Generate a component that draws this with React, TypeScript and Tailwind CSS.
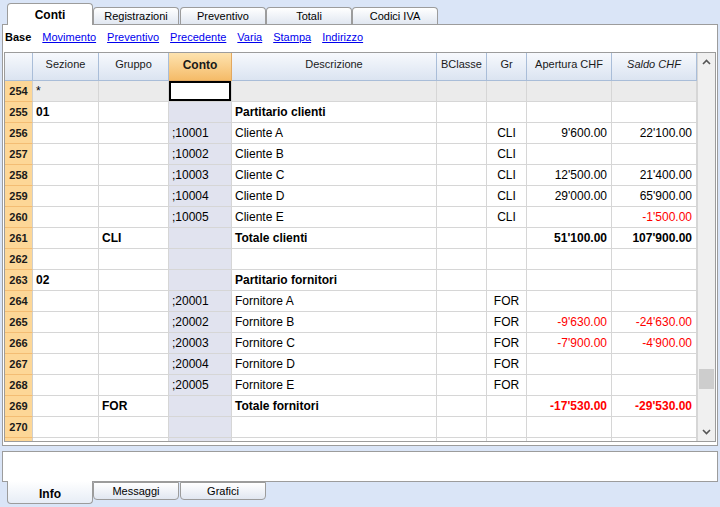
import React from "react";

type Row = {
  n?: string;
  sez?: string;
  gru?: string;
  conto?: string;
  desc?: string;
  gr?: string;
  ap?: string;
  sa?: string;
  bold?: boolean;
  apRed?: boolean;
  saRed?: boolean;
  gray?: boolean;
};

const rows: Row[] = [
  { n: "254", sez: "*", gray: true },
  { n: "255", sez: "01", desc: "Partitario clienti", bold: true },
  { n: "256", conto: ";10001", desc: "Cliente A", gr: "CLI", ap: "9'600.00", sa: "22'100.00" },
  { n: "257", conto: ";10002", desc: "Cliente B", gr: "CLI" },
  { n: "258", conto: ";10003", desc: "Cliente C", gr: "CLI", ap: "12'500.00", sa: "21'400.00" },
  { n: "259", conto: ";10004", desc: "Cliente D", gr: "CLI", ap: "29'000.00", sa: "65'900.00" },
  { n: "260", conto: ";10005", desc: "Cliente E", gr: "CLI", sa: "-1'500.00", saRed: true },
  { n: "261", gru: "CLI", desc: "Totale clienti", ap: "51'100.00", sa: "107'900.00", bold: true },
  { n: "262" },
  { n: "263", sez: "02", desc: "Partitario fornitori", bold: true },
  { n: "264", conto: ";20001", desc: "Fornitore A", gr: "FOR" },
  { n: "265", conto: ";20002", desc: "Fornitore B", gr: "FOR", ap: "-9'630.00", sa: "-24'630.00", apRed: true, saRed: true },
  { n: "266", conto: ";20003", desc: "Fornitore C", gr: "FOR", ap: "-7'900.00", sa: "-4'900.00", apRed: true, saRed: true },
  { n: "267", conto: ";20004", desc: "Fornitore D", gr: "FOR" },
  { n: "268", conto: ";20005", desc: "Fornitore E", gr: "FOR" },
  { n: "269", gru: "FOR", desc: "Totale fornitori", ap: "-17'530.00", sa: "-29'530.00", bold: true, apRed: true, saRed: true },
  { n: "270" },
  {},
];

const cellBase = "h-[21px] shrink-0 border-r border-b border-[#d6d6d6] flex items-center overflow-hidden whitespace-nowrap";

function DataRow({ r }: { r: Row }) {
  const bg = r.gray ? "bg-[#ebebeb]" : "bg-white";
  const b = r.bold ? "font-bold" : "";
  return (
    <div className="flex">
      <div className="h-[21px] w-[28px] shrink-0 bg-[#fdd797] border-r border-r-[#cfcfcf] border-b border-b-[#f3bd74] flex items-center justify-center text-[11px] font-bold text-[#1a1a1a]">
        {r.n}
      </div>
      <div className={`${cellBase} w-[66px] pl-[3px] ${bg} ${b}`}>{r.sez}</div>
      <div className={`${cellBase} w-[70px] pl-[3px] ${bg} ${b}`}>{r.gru}</div>
      {r.gray ? (
        <div className={`${cellBase} w-[63px] bg-[#ebebeb] p-0`}>
          <div className="w-[62px] h-[20px] bg-white border-2 border-black"></div>
        </div>
      ) : (
        <div className={`${cellBase} w-[63px] pl-[3px] bg-[#e1e3ef]`}>{r.conto}</div>
      )}
      <div className={`${cellBase} w-[205px] pl-[3px] ${bg} ${b}`}>{r.desc}</div>
      <div className={`${cellBase} w-[50px] ${bg}`}></div>
      <div className={`${cellBase} w-[40px] justify-center ${bg}`}>{r.gr}</div>
      <div className={`${cellBase} w-[85px] justify-end pr-[4px] ${bg} ${b} ${r.apRed ? "text-[#ff0000]" : ""}`}>{r.ap}</div>
      <div className={`${cellBase} w-[85px] justify-end pr-[4px] ${bg} ${b} ${r.saRed ? "text-[#ff0000]" : ""}`}>{r.sa}</div>
    </div>
  );
}

const hdr =
  "h-[28px] shrink-0 border-r border-b border-[#a9bdd8] bg-gradient-to-b from-[#f7f9fd] to-[#dbe4f1] flex items-center justify-center pb-[4px] text-[11px] text-[#1a1a1a]";

function TopTab({ label, active }: { label: string; active?: boolean }) {
  if (active) {
    return (
      <div className="relative z-10 -mb-px w-[86px] h-[22px] bg-white border border-b-0 border-[#9c9c9c] rounded-t-[4px] flex items-center justify-center text-[12px] font-bold text-black">
        {label}
      </div>
    );
  }
  return (
    <div className="w-[86px] h-[17px] bg-gradient-to-b from-white to-[#e1e7f1] border border-b-0 border-[#9c9c9c] rounded-t-[4px] flex items-center justify-center text-[11px] text-black">
      {label}
    </div>
  );
}

function BottomTab({ label, active }: { label: string; active?: boolean }) {
  if (active) {
    return (
      <div className="relative z-10 -mt-px w-[86px] h-[23px] bg-gradient-to-b from-white to-[#e7edf6] border border-t-0 border-[#9c9c9c] rounded-b-[4px] flex items-center justify-center pt-[4px] text-[12px] font-bold text-black">
        {label}
      </div>
    );
  }
  return (
    <div className="w-[86px] h-[18px] bg-gradient-to-b from-white to-[#e1e7f1] border border-t border-[#9c9c9c] rounded-b-[4px] flex items-center justify-center text-[11px] text-black">
      {label}
    </div>
  );
}

export default function App() {
  return (
    <div className="w-[720px] h-[507px] overflow-hidden bg-[#dae5f7] flex flex-col text-[12px] text-black [font-family:'Liberation_Sans',Arial,sans-serif]">
      {/* top tabs */}
      <div className="h-[24px] flex items-end pl-[7px] shrink-0">
        <TopTab label="Conti" active />
        <TopTab label="Registrazioni" />
        <div className="w-px" />
        <TopTab label="Preventivo" />
        <TopTab label="Totali" />
        <TopTab label="Codici IVA" />
      </div>

      {/* main panel */}
      <div className="mx-[2px] h-[422px] shrink-0 bg-white border border-[#9c9c9c] flex flex-col">
        <div className="h-[27px] shrink-0 flex items-center gap-[11px] pl-[2px] pb-[3px] text-[11px]">
          <span className="font-bold text-black">Base</span>
          <span className="text-[#0000ee] underline">Movimento</span>
          <span className="text-[#0000ee] underline">Preventivo</span>
          <span className="text-[#0000ee] underline">Precedente</span>
          <span className="text-[#0000ee] underline">Varia</span>
          <span className="text-[#0000ee] underline">Stampa</span>
          <span className="text-[#0000ee] underline">Indirizzo</span>
        </div>
        <div className="ml-[1px] mr-[1px] h-[390px] shrink-0 border border-[#9c9c9c] flex overflow-hidden">
          <div className="flex flex-col w-[692px] shrink-0 overflow-hidden">
            <div className="flex">
              <div className={`${hdr} w-[28px]`}></div>
              <div className={`${hdr} w-[66px]`}>Sezione</div>
              <div className={`${hdr} w-[70px]`}>Gruppo</div>
              <div className="h-[28px] w-[63px] shrink-0 border-r border-b border-[#e2a860] bg-gradient-to-b from-[#fde3ae] to-[#f5bb68] flex items-center justify-center pb-[4px] text-[12px] font-bold text-[#1a1a1a]">
                Conto
              </div>
              <div className={`${hdr} w-[205px]`}>Descrizione</div>
              <div className={`${hdr} w-[50px]`}>BClasse</div>
              <div className={`${hdr} w-[40px]`}>Gr</div>
              <div className={`${hdr} w-[85px]`}>Apertura CHF</div>
              <div className={`${hdr} w-[85px] italic`}>Saldo CHF</div>
            </div>
            {rows.map((r, i) => (
              <DataRow key={i} r={r} />
            ))}
          </div>
          {/* scrollbar */}
          <div className="flex-1 bg-[#f0f0f0] border-l border-[#d6d6d6] flex flex-col items-center">
            <div className="h-[18px] w-full flex items-center justify-center">
              <svg width="9" height="6" viewBox="0 0 9 6">
                <path d="M1 5 L4.5 1.5 L8 5" fill="none" stroke="#555" strokeWidth="1.6" />
              </svg>
            </div>
            <div className="flex-1 w-full flex flex-col items-center justify-end pb-[34px]">
              <div className="w-[15px] h-[20px] bg-[#cdcdcd]" />
            </div>
            <div className="h-[18px] w-full flex items-center justify-center">
              <svg width="9" height="6" viewBox="0 0 9 6">
                <path d="M1 1 L4.5 4.5 L8 1" fill="none" stroke="#555" strokeWidth="1.6" />
              </svg>
            </div>
          </div>
        </div>
      </div>

      {/* info box */}
      <div className="mx-[2px] mt-[5px] h-[31px] shrink-0 bg-white border border-[#9c9c9c]" />

      {/* bottom tabs */}
      <div className="flex items-start pl-[7px]">
        <BottomTab label="Info" active />
        <BottomTab label="Messaggi" />
        <div className="w-px" />
        <BottomTab label="Grafici" />
      </div>
    </div>
  );
}
